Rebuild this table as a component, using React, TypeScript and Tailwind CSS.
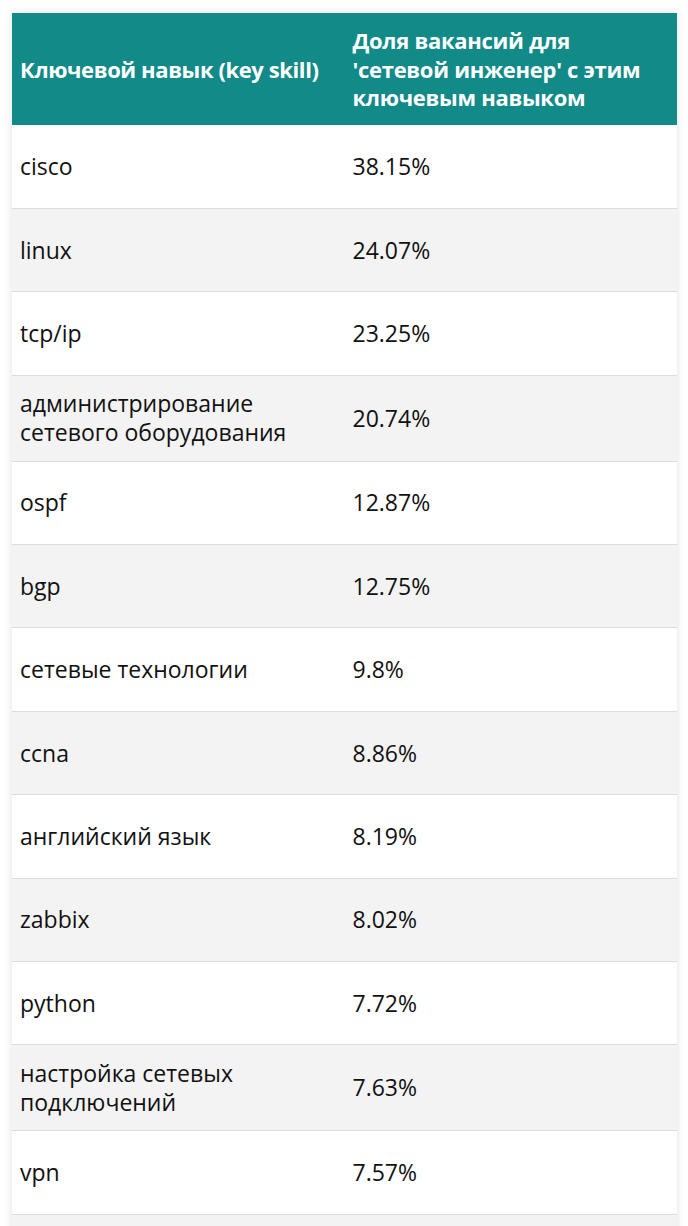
import React from "react";

const rows: [string, string][] = [
  ["cisco", "38.15%"],
  ["linux", "24.07%"],
  ["tcp/ip", "23.25%"],
  ["администрирование сетевого оборудования", "20.74%"],
  ["ospf", "12.87%"],
  ["bgp", "12.75%"],
  ["сетевые технологии", "9.8%"],
  ["ccna", "8.86%"],
  ["английский язык", "8.19%"],
  ["zabbix", "8.02%"],
  ["python", "7.72%"],
  ["настройка сетевых подключений", "7.63%"],
  ["vpn", "7.57%"],
  ["", ""],
];

export default function App() {
  return (
    <div className="h-[1226px] bg-white pt-[13px] pl-[12px] overflow-hidden" style={{ fontFamily: '"Open Sans", "Noto Sans", sans-serif' }}>
      <table className="w-[665px] border-collapse table-fixed shadow-[0_0_8px_rgba(0,0,0,0.12)] text-[23px] leading-[29px] text-[#111]">
        <thead>
          <tr className="bg-[#128a88] text-white h-[112px]">
            <th className="w-1/2 text-left font-bold text-[22px] leading-[28.5px] pl-[8px] pr-[8px] align-middle tracking-[-0.4px]">Ключевой навык (key skill)</th>
            <th className="w-1/2 text-left font-bold text-[22px] leading-[28.5px] pl-[8px] pr-[20px] align-middle tracking-[-0.3px]">Доля вакансий для 'сетевой инженер' с этим ключевым навыком</th>
          </tr>
        </thead>
        <tbody>
          {rows.map(([k, v], i) => (
            <tr key={i} className={`h-[83.4px] border-b border-[#dddddd] ${i % 2 === 1 ? "bg-[#f3f3f3]" : "bg-white"}`}>
              <td className="px-[8px] py-[13.5px] align-middle">{k}</td>
              <td className="px-[8px] py-[13.5px] align-middle">{v}</td>
            </tr>
          ))}
        </tbody>
      </table>
    </div>
  );
}
